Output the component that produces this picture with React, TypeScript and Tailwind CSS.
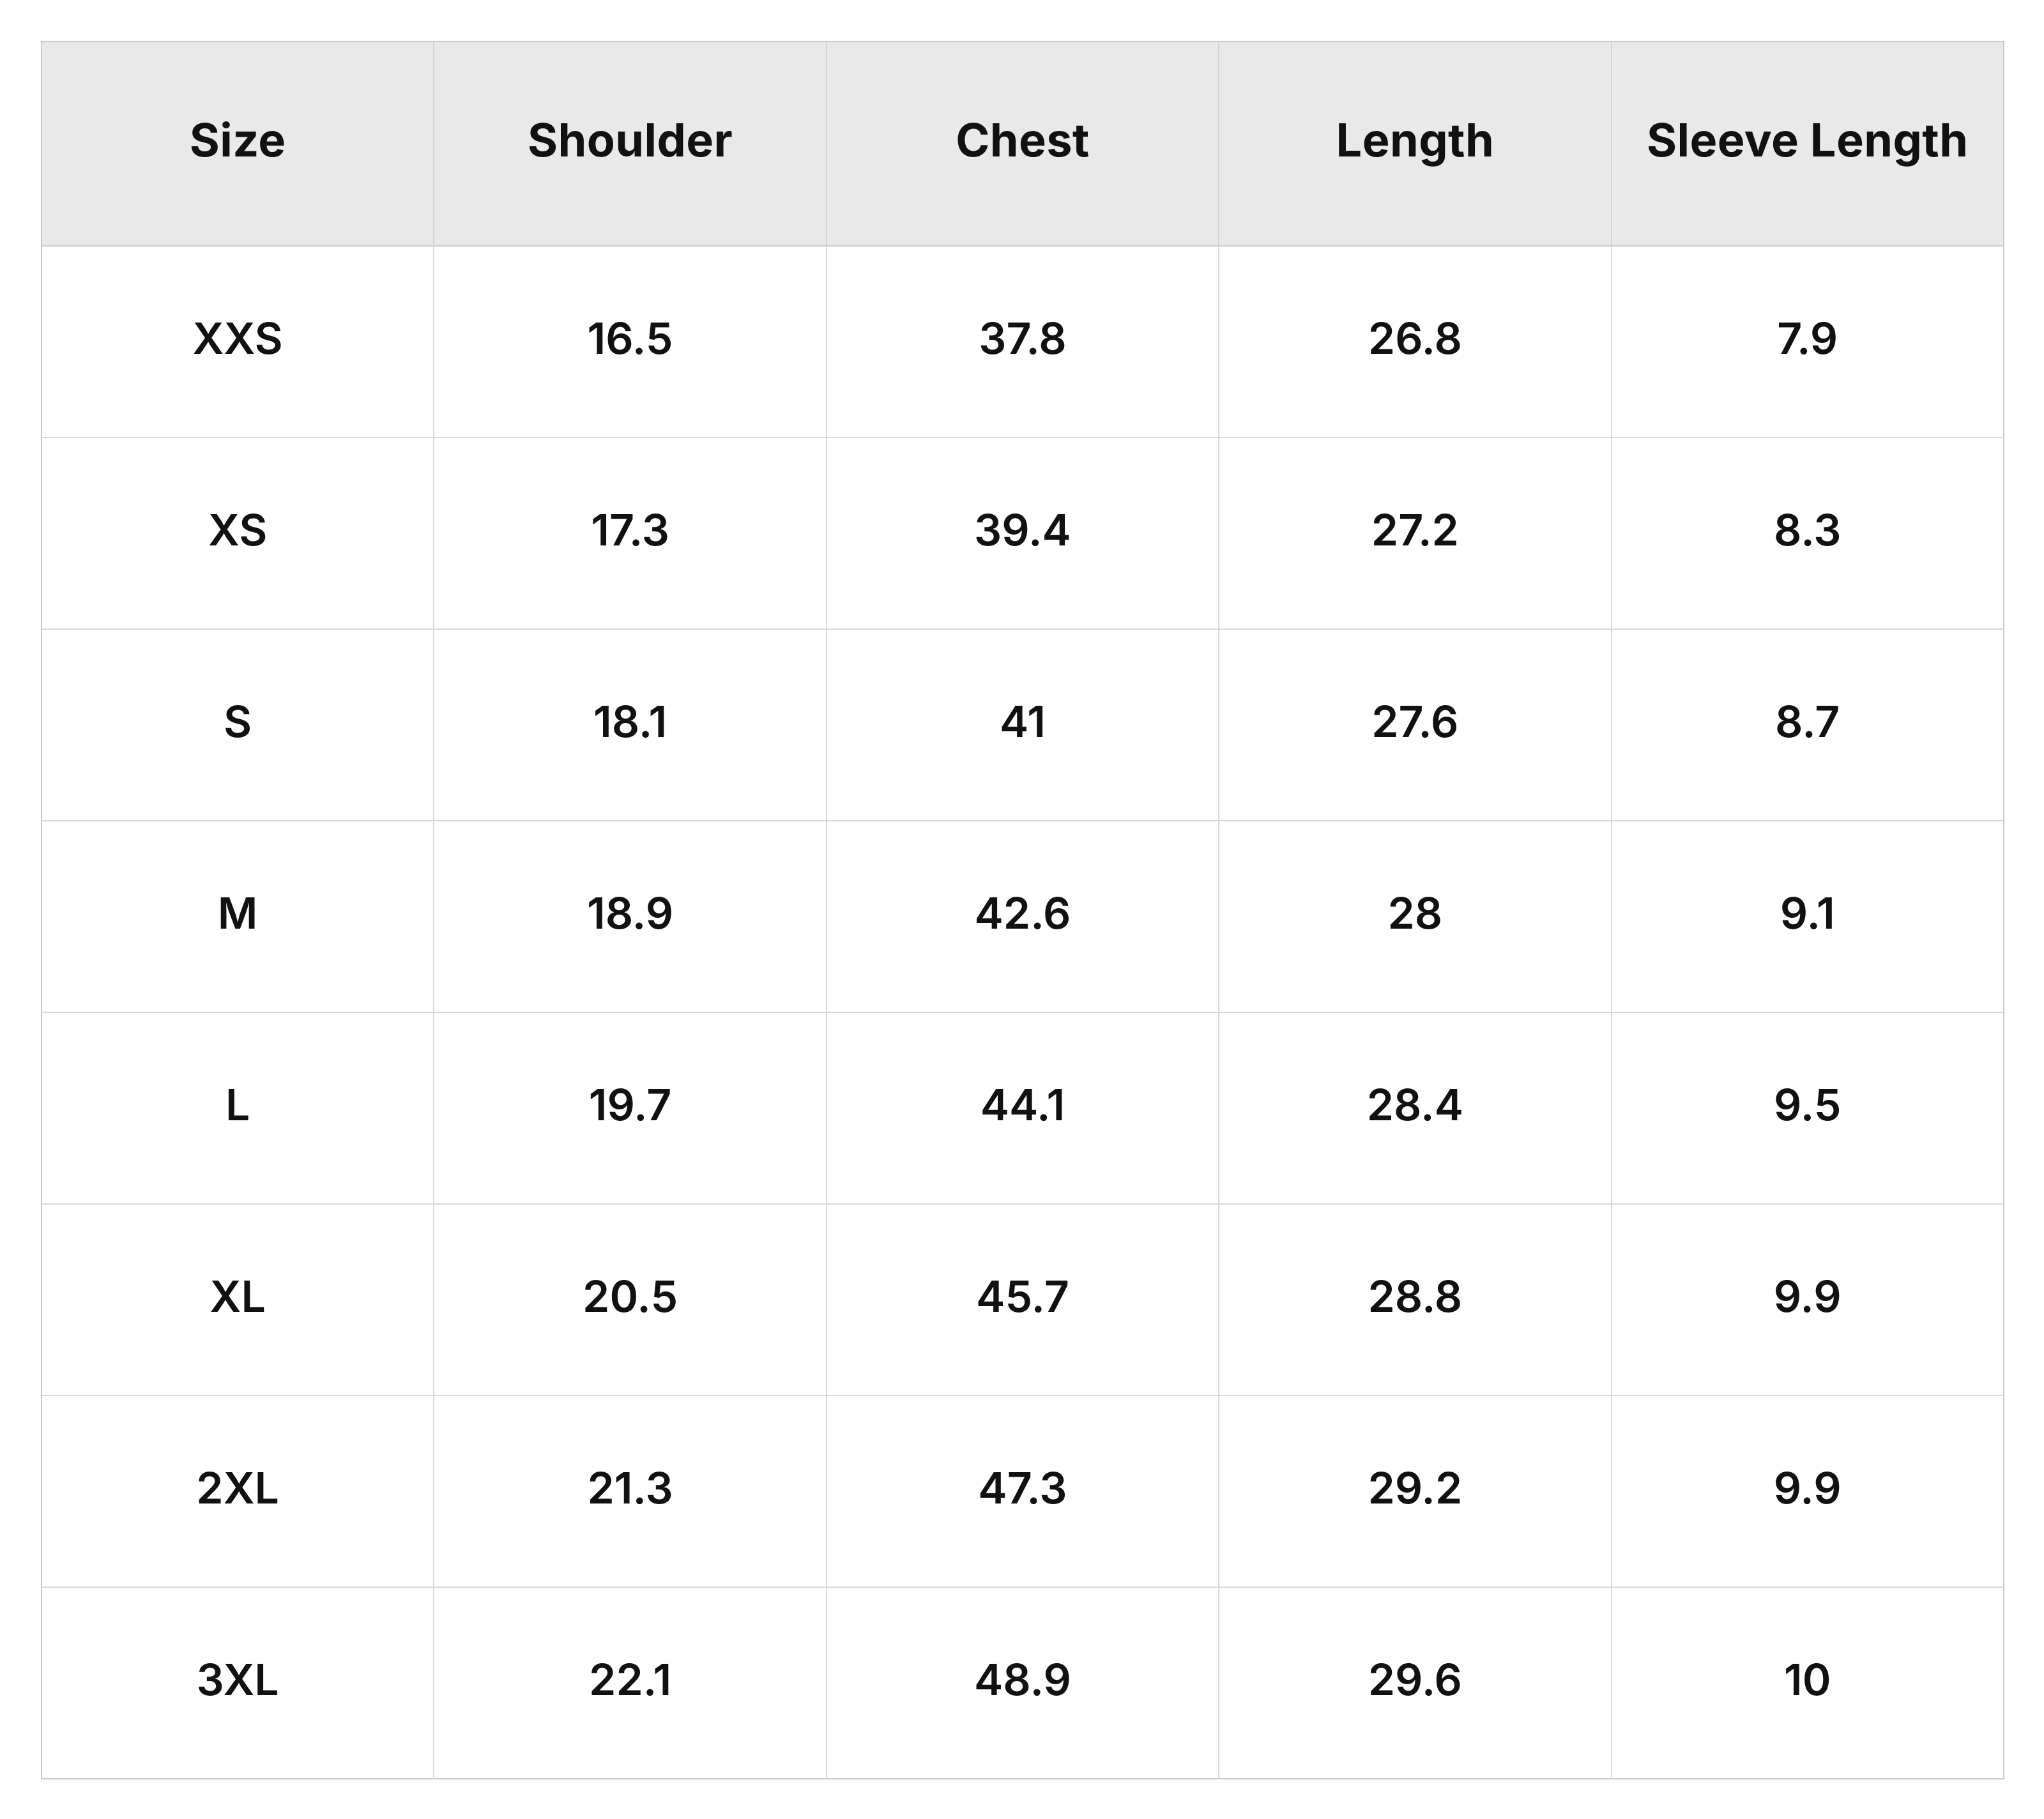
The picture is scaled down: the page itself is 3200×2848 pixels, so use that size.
import React from "react";

const headers = ["Size", "Shoulder", "Chest", "Length", "Sleeve Length"];
const rows: string[][] = [
  ["XXS", "16.5", "37.8", "26.8", "7.9"],
  ["XS", "17.3", "39.4", "27.2", "8.3"],
  ["S", "18.1", "41", "27.6", "8.7"],
  ["M", "18.9", "42.6", "28", "9.1"],
  ["L", "19.7", "44.1", "28.4", "9.5"],
  ["XL", "20.5", "45.7", "28.8", "9.9"],
  ["2XL", "21.3", "47.3", "29.2", "9.9"],
  ["3XL", "22.1", "48.9", "29.6", "10"],
];

export default function App() {
  return (
    <div
      className="w-[3200px] h-[2848px] bg-white pt-[64px] pl-[64px]"
      style={{ fontFamily: "Inter, 'Noto Sans', sans-serif" }}
    >
      <div className="w-[3074px] grid grid-cols-5 border-t-2 border-l-2 border-[#c9c9c9] text-[#111111] font-semibold text-[68px]">
        {headers.map((h, i) => (
          <div
            key={h}
            className={`h-[320px] bg-[#e9e9e9] flex items-center justify-center border-b-2 border-b-[#cccccc] ${
              i === 4 ? "border-r-2 border-r-[#c9c9c9]" : "border-r-2 border-r-[#d4d4d4]"
            }`}
          >
            <span className="-mt-[13px] font-bold text-[72px] tracking-[0.4px]">{h}</span>
          </div>
        ))}
        {rows.map((r, ri) =>
          r.map((c, ci) => (
            <div
              key={`${ri}-${ci}`}
              className={`h-[300px] flex items-center justify-center border-b-2 ${
                ri === rows.length - 1 ? "border-b-[#c9c9c9]" : "border-b-[#d9d9d9]"
              } border-r-2 ${ci === 4 ? "border-r-[#c9c9c9]" : "border-r-[#d9d9d9]"}`}
            >
              <span className="-mt-[12px]">{c}</span>
            </div>
          ))
        )}
      </div>
    </div>
  );
}
